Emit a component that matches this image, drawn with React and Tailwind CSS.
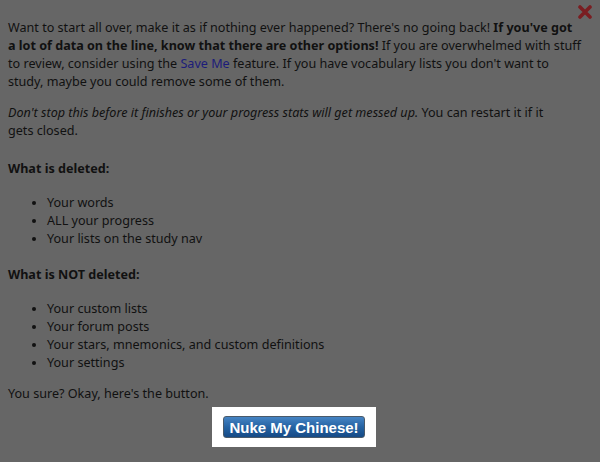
import React from 'react';

const deleted = ['Your words', 'ALL your progress', 'Your lists on the study nav'];
const kept = ['Your custom lists', 'Your forum posts', 'Your stars, mnemonics, and custom definitions', 'Your settings'];

function BulletList({ items, className }) {
  return (
    <ul className={`list-disc pl-[39px] mt-[16px] ${className}`}>
      {items.map((item) => (
        <li key={item} className="leading-[18px]">{item}</li>
      ))}
    </ul>
  );
}

export default function App() {
  return (
    <div className="relative w-[600px] h-[462px] bg-[#666666] text-[#111111] text-[12.6px] leading-[18px] font-['Noto_Sans',sans-serif] overflow-hidden">
      <button className="absolute right-[8px] top-[5px] w-[14px] h-[14px]" aria-label="Close">
        <svg viewBox="0 0 14 14" className="w-[14px] h-[14px]">
          <path d="M2 2 L12 12 M12 2 L2 12" stroke="#7a1e22" strokeWidth="3.6" strokeLinecap="round" />
        </svg>
      </button>

      <div className="pt-[19px] px-[8px] w-[600px]">
        <p className="mb-[13px] whitespace-nowrap">
          Want to start all over, make it as if nothing ever happened? There's no going back! <b>If you've got</b>
          <br />
          <b>a lot of data on the line, know that there are other options!</b> If you are overwhelmed with stuff
          <br />
          to review, consider using the <a className="text-[#1c1c7a]">Save Me</a> feature. If you have vocabulary lists you don't want to
          <br />
          study, maybe you could remove some of them.
        </p>
        <p className="mb-[20px] whitespace-nowrap">
          <i>Don't stop this before it finishes or your progress stats will get messed up.</i> You can restart it if it
          <br />
          gets closed.
        </p>

        <p className="font-bold">What is deleted:</p>
        <BulletList items={deleted} className="mb-[18px]" />

        <p className="font-bold">What is NOT deleted:</p>
        <BulletList items={kept} className="mb-[13px]" />

        <p>You sure? Okay, here's the button.</p>

        <div className="flex justify-center mt-[4px] pr-[12px]">
          <div className="bg-white w-[164px] h-[40px] flex items-center justify-center">
            <button className="w-[142px] h-[22px] rounded-[3px] border border-[#4a5a6a] bg-gradient-to-b from-[#4584c4] via-[#2563a3] to-[#164a86] text-white font-bold text-[15px] leading-none font-['Liberation_Sans',sans-serif]">
              Nuke My Chinese!
            </button>
          </div>
        </div>
      </div>
    </div>
  );
}
